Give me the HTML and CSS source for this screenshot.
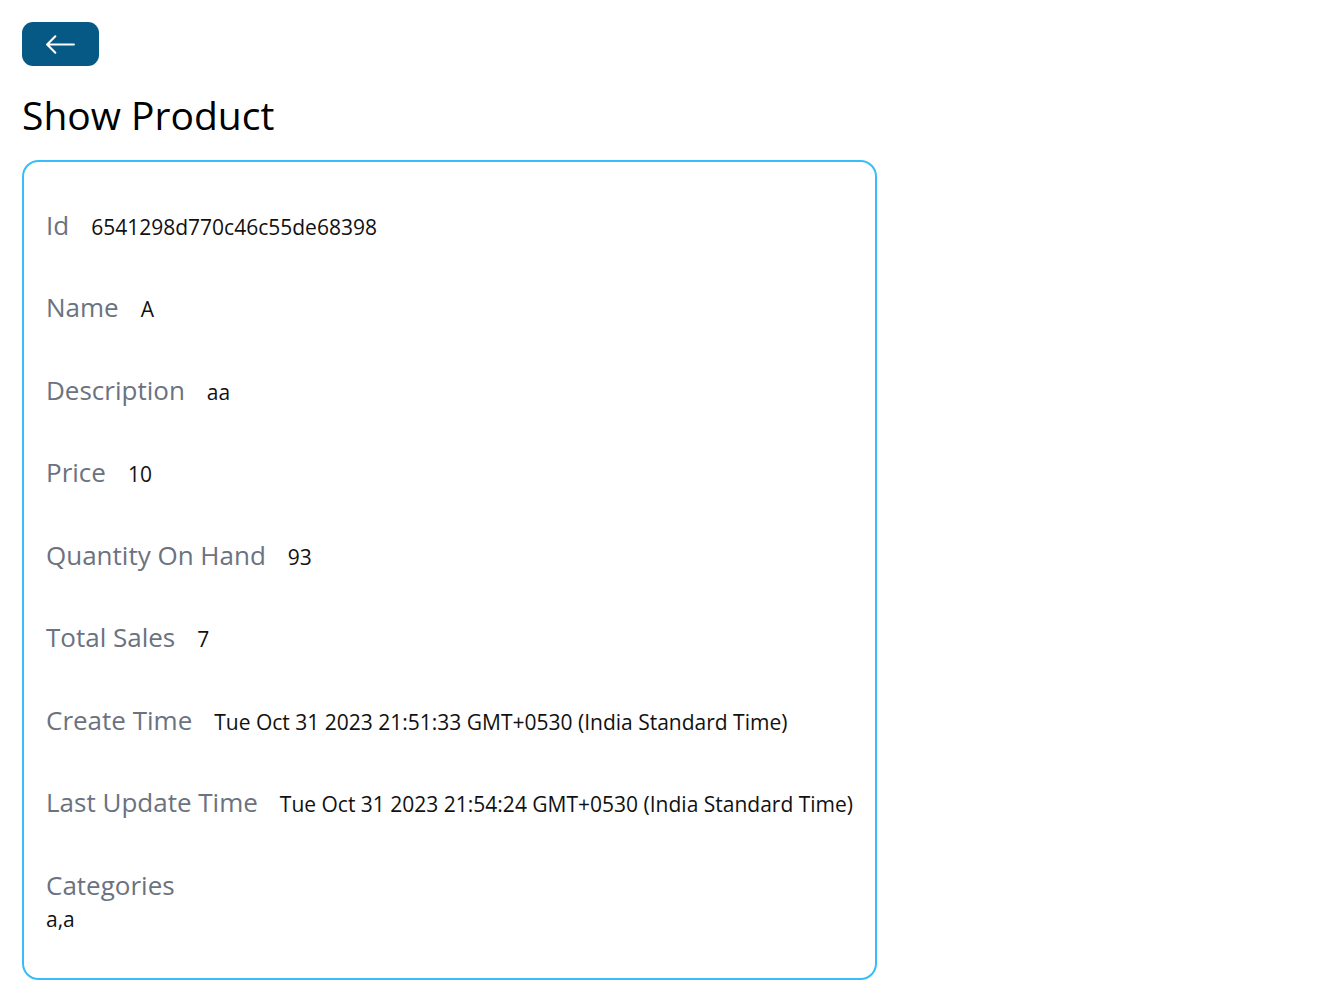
FILE: index.html
```html
<!DOCTYPE html>
<html lang="en">
<head>
<meta charset="utf-8">
<title>Show Product</title>
<link rel="stylesheet" href="styles.css">
</head>
<body>
<div class="page">
  <a class="back-btn" href="#" aria-label="Back">
    <svg class="back-icon" viewBox="0 0 16 16" fill="currentColor" xmlns="http://www.w3.org/2000/svg">
      <path fill-rule="evenodd" d="M15 8a.5.5 0 0 0-.5-.5H2.707l3.147-3.146a.5.5 0 1 0-.708-.708l-4 4a.5.5 0 0 0 0 .708l4 4a.5.5 0 0 0 .708-.708L2.707 8.5H14.5A.5.5 0 0 0 15 8z"/>
    </svg>
  </a>
  <h1 class="title">Show Product</h1>
  <div class="card">
    <div class="row"><span class="label">Id</span><span class="value">6541298d770c46c55de68398</span></div>
    <div class="row"><span class="label">Name</span><span class="value">A</span></div>
    <div class="row"><span class="label">Description</span><span class="value">aa</span></div>
    <div class="row"><span class="label">Price</span><span class="value">10</span></div>
    <div class="row"><span class="label">Quantity On Hand</span><span class="value">93</span></div>
    <div class="row"><span class="label">Total Sales</span><span class="value">7</span></div>
    <div class="row"><span class="label">Create Time</span><span class="value">Tue Oct 31 2023 21:51:33 GMT+0530 (India Standard Time)</span></div>
    <div class="row"><span class="label">Last Update Time</span><span class="value">Tue Oct 31 2023 21:54:24 GMT+0530 (India Standard Time)</span></div>
    <div class="row row-stack"><span class="label">Categories</span><div class="value-block">a,a</div></div>
  </div>
</div>
</body>
</html>
```

FILE: styles.css
```css
* { box-sizing: border-box; }
html, body { margin: 0; padding: 0; background: #ffffff; }
body {
  font-family: "Open Sans", "Noto Sans", "Liberation Sans", sans-serif;
  color: #111111;
  font-size: 21px;
  line-height: 33px;
}
.page { padding: 22px; }
.back-btn {
  display: block;
  width: 77px;
  height: 44px;
  padding: 5.5px 22px;
  background: #075985;
  color: #ffffff;
  border-radius: 11px;
}
.back-icon { display: block; width: 33px; height: 33px; }
.title {
  margin: 22px 0;
  padding-top: 2px;
  height: 49.5px;
  font-size: 39px;
  line-height: 49.5px;
  font-weight: 400;
  color: #000;
}
.card {
  display: flex;
  flex-direction: column;
  width: fit-content;
  border: 2.75px solid #38bdf8;
  border-radius: 16.5px;
  padding: 22px;
}
.row { margin: 22px 0; }
.label {
  font-size: 26px;
  line-height: 38.5px;
  color: #6b7280;
  margin-right: 22px;
}
.value { font-size: 21px; }
.value-block { font-size: 21px; line-height: 30px; }
```
